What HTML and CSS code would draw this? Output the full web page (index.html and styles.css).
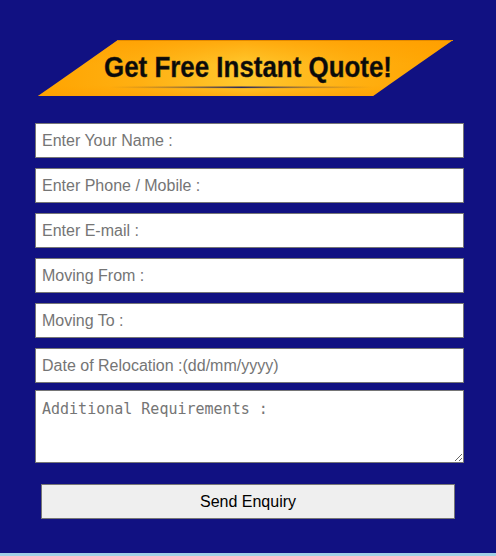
FILE: index.html
```html
<!DOCTYPE html>
<html>
<head>
<meta charset="utf-8">
<link rel="stylesheet" href="styles.css">
</head>
<body>
<div class="wrap">
  <svg class="banner" width="415" height="56" viewBox="0 0 415 56">
    <defs>
      <linearGradient id="h" x1="0" y1="0" x2="1" y2="0">
        <stop offset="0" stop-color="#ffa400"/>
        <stop offset="0.25" stop-color="#ffb012"/>
        <stop offset="0.5" stop-color="#ffc82e"/>
        <stop offset="0.75" stop-color="#ffb012"/>
        <stop offset="1" stop-color="#ffa400"/>
      </linearGradient>
      <linearGradient id="v" x1="0" y1="0" x2="0" y2="1">
        <stop offset="0" stop-color="#ff9d00" stop-opacity="0.7"/>
        <stop offset="0.45" stop-color="#ffa200" stop-opacity="0"/>
        <stop offset="0.8" stop-color="#ffa200" stop-opacity="0"/>
        <stop offset="1" stop-color="#ff9d00" stop-opacity="0.6"/>
      </linearGradient>
      <linearGradient id="l" x1="0" y1="0" x2="1" y2="0">
        <stop offset="0" stop-color="#9a6a2a" stop-opacity="0"/>
        <stop offset="0.5" stop-color="#2a2a5a"/>
        <stop offset="1" stop-color="#9a6a2a" stop-opacity="0"/>
      </linearGradient>
    </defs>
    <polygon points="80,0 415,0 335,56 0,56" fill="url(#h)"/>
    <polygon points="80,0 415,0 335,56 0,56" fill="url(#v)"/>
    <line x1="80" y1="0.5" x2="415" y2="0.5" stroke="#e38a00" stroke-width="1"/>
    <rect x="72" y="46.5" width="263" height="1.6" fill="url(#l)"/>
    <text class="bt" x="210" y="37" text-anchor="middle" textLength="288" lengthAdjust="spacingAndGlyphs">Get Free Instant Quote!</text>
  </svg>
  <form class="form">
    <input class="field" type="text" placeholder="Enter Your Name :">
    <input class="field" type="text" placeholder="Enter Phone / Mobile :">
    <input class="field" type="text" placeholder="Enter E-mail :">
    <input class="field" type="text" placeholder="Moving From :">
    <input class="field" type="text" placeholder="Moving To :">
    <input class="field date" type="text" placeholder="Date of Relocation :(dd/mm/yyyy)">
    <textarea class="area" placeholder="Additional Requirements :"></textarea>
    <button class="send" type="button">Send Enquiry</button>
  </form>
</div>
<div class="strip"></div>
</body>
</html>
```

FILE: styles.css
```css
html, body {
  margin: 0;
  padding: 0;
}
body {
  background: #111182;
  width: 496px;
  height: 556px;
  overflow: hidden;
  font-family: "Liberation Sans", Arial, sans-serif;
}
.wrap {
  padding: 40px 0 34px 35px;
  height: 479px;
}
.banner {
  display: block;
  margin-left: 3px;
  margin-bottom: 27px;
}
.bt {
  font-family: "Liberation Sans", Arial, sans-serif;
  font-weight: bold;
  font-size: 29px;
  fill: #0a0a0a;
  stroke: #3a2a10;
  stroke-width: 0.4px;
}
.form {
  display: flex;
  flex-direction: column;
  align-items: flex-start;
  margin: 0;
}
.field {
  box-sizing: border-box;
  width: 429px;
  height: 35px;
  margin: 0 0 10px 0;
  padding: 0 6px;
  border: 1px solid #767676;
  background: #fff;
  font-family: "Liberation Sans", Arial, sans-serif;
  font-size: 16px;
  color: #000;
  outline: none;
}
.field::placeholder {
  color: #757575;
  opacity: 1;
}
.field.date {
  margin-bottom: 7px;
}
.area {
  box-sizing: border-box;
  width: 429px;
  height: 73px;
  margin: 0 0 21px 0;
  padding: 9px 6px 7px;
  border: 1px solid #767676;
  background: #fff;
  font-family: "DejaVu Sans Mono", "Liberation Mono", monospace;
  font-size: 15px;
  line-height: 18px;
  resize: vertical;
  outline: none;
}
.area::placeholder {
  color: #757575;
  opacity: 1;
}
.send {
  box-sizing: border-box;
  width: 414px;
  height: 35px;
  margin-left: 6px;
  border: 1px solid #767676;
  background: #efefef;
  font-family: "Liberation Sans", Arial, sans-serif;
  font-size: 16px;
  color: #000;
  padding: 0;
}
.strip {
  height: 3px;
  background: #a2d0e6;
}
```
